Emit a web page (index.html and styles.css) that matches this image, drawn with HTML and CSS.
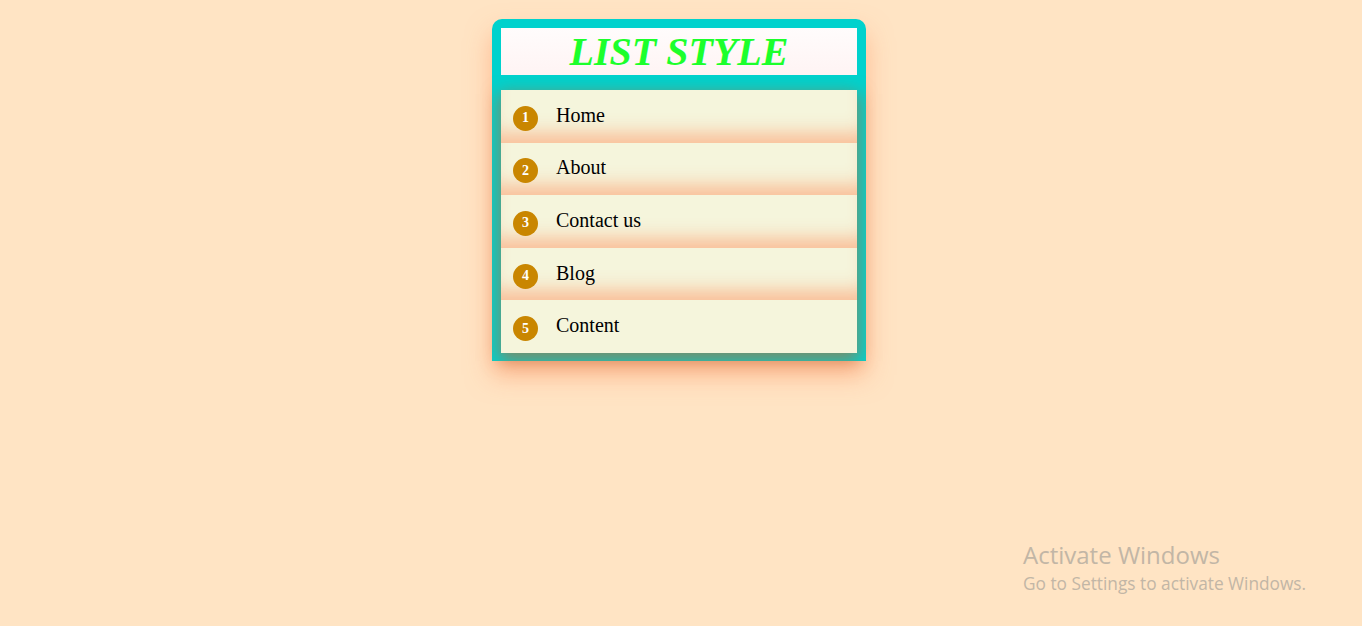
FILE: index.html
```html
<!DOCTYPE html>
<html>
<head>
<meta charset="utf-8">
<title>List Style</title>
<link rel="stylesheet" href="styles.css">
</head>
<body>
<div class="page">
  <div class="card">
    <div class="head"><h1 class="title">LIST STYLE</h1></div>
    <ol class="list">
      <li class="item"><span class="num">1</span><span class="label">Home</span></li>
      <li class="item"><span class="num">2</span><span class="label">About</span></li>
      <li class="item"><span class="num">3</span><span class="label">Contact us</span></li>
      <li class="item"><span class="num">4</span><span class="label">Blog</span></li>
      <li class="item"><span class="num">5</span><span class="label">Content</span></li>
    </ol>
  </div>
</div>
<div class="watermark">
  <div class="wm-title">Activate Windows</div>
  <div class="wm-sub">Go to Settings to activate Windows.</div>
</div>
</body>
</html>
```
FILE: styles.css
```css
html, body {
  margin: 0;
  padding: 0;
}
body {
  background: #ffe4c4;
  font-family: "Liberation Serif", "Times New Roman", serif;
  width: 1362px;
  height: 626px;
  overflow: hidden;
  position: relative;
}
.page {
  display: flex;
  justify-content: center;
  padding-top: 19px;
  padding-right: 4px;
}
.card {
  width: 356px;
  padding: 9px 9px 8px;
  background: #00d2cd;
  border-radius: 10px 10px 0 0;
  box-shadow: 0 14px 26px rgba(255, 150, 100, 0.55);
}
.head {
  height: 47px;
  background: linear-gradient(#fffcfc, #fff4f4);
  display: flex;
  align-items: center;
  justify-content: center;
}
.title {
  margin: 0;
  font-size: 40px;
  font-style: italic;
  font-weight: bold;
  color: #1cff2c;
  line-height: 1;
}
.list {
  list-style: none;
  margin: 15px 0 0;
  padding: 0;
  box-shadow: 0 6px 16px 2px rgba(190, 100, 50, 0.65);
}
.item {
  height: 52.6px;
  background: #f5f5dc;
  display: flex;
  align-items: center;
  padding-left: 12px;
  box-shadow: inset 0 -20px 18px -10px rgba(250, 185, 145, 0.9);
}
.item:last-child {
  box-shadow: none;
}
.num {
  width: 25px;
  height: 25px;
  border-radius: 50%;
  background: #c98600;
  color: #fff;
  font-weight: bold;
  font-size: 14px;
  display: flex;
  align-items: center;
  justify-content: center;
  margin-top: 4px;
  margin-right: 18px;
}
.label {
  font-size: 20px;
  color: #000;
  margin-top: -2px;
}
.watermark {
  position: absolute;
  left: 1023px;
  top: 540px;
  color: #c2b6a6;
  font-family: "Open Sans", "Noto Sans", sans-serif;
}
.wm-title {
  font-size: 24px;
  line-height: 30px;
}
.wm-sub {
  font-size: 17.3px;
  line-height: 28px;
}
```
